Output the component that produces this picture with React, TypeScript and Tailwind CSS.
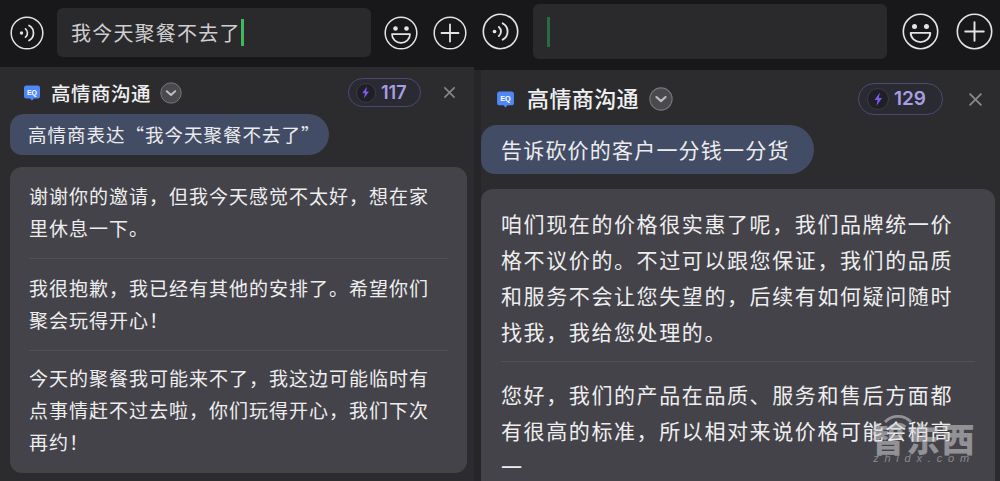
const font = { fontFamily: '"Noto Sans CJK SC", "Noto Sans", sans-serif' };

const VoiceIcon = ({ size }: { size: number }) => (
  <svg width={size} height={size} viewBox="0 0 34 34" fill="none" stroke="#e4e4e4">
    <circle cx="17" cy="17" r="15.8" strokeWidth="1.5" />
    <circle cx="11.5" cy="17" r="1.7" fill="#e4e4e4" stroke="none" />
    <path d="M15.5 12.8a5.5 5.5 0 0 1 0 8.4" strokeWidth="1.7" strokeLinecap="round" />
    <path d="M19 9.5a8.5 8.5 0 0 1 0 15" strokeWidth="1.7" strokeLinecap="round" />
  </svg>
);

const SmileIcon = ({ size }: { size: number }) => (
  <svg width={size} height={size} viewBox="0 0 34 34" fill="none" stroke="#e4e4e4">
    <circle cx="17" cy="17" r="15.8" strokeWidth="1.5" />
    <circle cx="11.5" cy="12.5" r="2.3" fill="#e4e4e4" stroke="none" />
    <circle cx="22.5" cy="12.5" r="2.3" fill="#e4e4e4" stroke="none" />
    <path d="M8 18.2h18a9 8.6 0 0 1-18 0z" strokeWidth="1.7" strokeLinejoin="round" />
  </svg>
);

const PlusIcon = ({ size }: { size: number }) => (
  <svg width={size} height={size} viewBox="0 0 34 34" fill="none" stroke="#e4e4e4">
    <circle cx="17" cy="17" r="15.8" strokeWidth="1.5" />
    <path d="M17 8.5v17M8.5 17h17" strokeWidth="1.8" strokeLinecap="round" />
  </svg>
);

const EqIcon = ({ size }: { size: number }) => (
  <svg width={size} height={size} viewBox="0 0 18 18">
    <path d="M3.5 1.5h11a2.5 2.5 0 0 1 2.5 2.5v8a2.5 2.5 0 0 1-2.5 2.5h-3.7L9 16.8l-1.8-2.3H3.5A2.5 2.5 0 0 1 1 12V4a2.5 2.5 0 0 1 2.5-2.5z" fill="#4f87f6" />
    <text x="9" y="10.8" textAnchor="middle" fill="#fff" fontSize="7" fontWeight="700" fontFamily="Liberation Sans, sans-serif">EQ</text>
  </svg>
);

const Chevron = ({ size }: { size: number }) => (
  <svg width={size} height={size} viewBox="0 0 22 22" fill="none">
    <circle cx="11" cy="11" r="10.2" fill="#4a4a4e" stroke="#77777b" strokeWidth="1" />
    <path d="M6.8 9.2l4.2 3.8 4.2-3.8" stroke="#bdbdc0" strokeWidth="2" strokeLinecap="round" strokeLinejoin="round" />
  </svg>
);

const Bolt = ({ size }: { size: number }) => (
  <span className="flex items-center justify-center rounded-full bg-[#1f1f25] border border-[#3b3a48]" style={{ width: size, height: size }}>
    <svg width={size * 0.66} height={size * 0.66} viewBox="0 0 14 14">
      <path d="M8.6 0.6L3.4 7.8h3L5.2 13.4l5.4-7.6H7.5z" fill="#7b5cf2" />
    </svg>
  </span>
);

const Close = ({ size }: { size: number }) => (
  <svg width={size} height={size} viewBox="0 0 14 14" fill="none">
    <path d="M1.5 1.5l11 11M12.5 1.5l-11 11" stroke="#88888c" strokeWidth="1.7" />
  </svg>
);

const Watermark = () => (
  <div className="absolute left-[866px] top-[412px] w-[116px] flex flex-col items-center opacity-55 pointer-events-none">
    <svg width="30" height="17" viewBox="0 0 30 17" fill="none" stroke="#d2d2d4" strokeWidth="2.8" className="self-start ml-[17px] -mb-[6px]">
      <path d="M2 10a18 18 0 0 1 26 0" />
      <path d="M7.5 15a11 11 0 0 1 15 0" />
    </svg>
    <div className="text-[33px] leading-[31px] tracking-[2px] font-black text-[#d2d2d4]">智东西</div>
    <div className="text-[11px] leading-[8px] italic tracking-[5.8px] text-[#c4c4c7] font-['Liberation_Sans',sans-serif]">zhidx.com</div>
  </div>
);

export default function App() {
  return (
    <div className="relative flex w-[1000px] h-[481px] overflow-hidden bg-[#18181a] text-[#ececee]" style={font}>
      {/* left phone */}
      <div className="w-[474px] h-full shrink-0 flex flex-col bg-[#2c2c2e]">
        <div className="h-[67px] shrink-0 flex items-start bg-[#18181a] pt-[8px]">
          <div className="mt-[8px] ml-[10px]"><VoiceIcon size={34} /></div>
          <div className="ml-[13px] w-[314px] h-[49px] rounded-[6px] bg-[#2a2a2d] flex items-center pl-[14px] text-[20px] tracking-[1.2px] text-[#cfcfd1] whitespace-nowrap">
            我今天聚餐不去了
            <span className="w-[3px] h-[27px] bg-[#3fb85f]" />
          </div>
          <div className="mt-[8px] ml-[13px]"><SmileIcon size={34} /></div>
          <div className="mt-[8px] ml-[15px]"><PlusIcon size={34} /></div>
        </div>
        <div className="flex items-center h-[47px] shrink-0 pt-[4px] pl-[23px]">
          <EqIcon size={18} />
          <span className="ml-[10px] text-[19.5px] font-medium tracking-[0.5px] text-[#f0f0f2] whitespace-nowrap">高情商沟通</span>
          <span className="ml-[9px]"><Chevron size={22} /></span>
          <span className="ml-[auto] flex items-center h-[29px] w-[73px] pl-[7px] rounded-full border border-[#4b4a72] bg-[#2a2a33]">
            <Bolt size={20} />
            <span className="ml-[5px] text-[18px] font-semibold text-[#a99de6] font-['Inter',sans-serif]">117</span>
          </span>
          <span className="ml-[22px] mr-[18px]"><Close size={13} /></span>
        </div>
        <div className="self-start shrink-0 ml-[10px] w-[319px] h-[41px] flex items-center pl-[18px] rounded-tl-[14px] rounded-bl-[12px] rounded-r-[21px] bg-[#434c65] text-[18.5px] tracking-[1px] whitespace-nowrap">
          高情商表达“我今天聚餐不去了”
        </div>
        <div className="shrink-0 mx-[10px] w-[457px] mt-[12px] h-[306px] rounded-[12px] bg-[#444349] px-[19px] text-[19px] leading-[32px] tracking-[1px] text-[#eeeeef]">
          <p className="h-[92px] pt-[13px] border-b border-[#525157]">谢谢你的邀请，但我今天感觉不太好，想在家里休息一下。</p>
          <p className="h-[92px] pt-[13px] border-b border-[#525157]">我很抱歉，我已经有其他的安排了。希望你们聚会玩得开心！</p>
          <p className="pt-[11px]">今天的聚餐我可能来不了，我这边可能临时有点事情赶不过去啦，你们玩得开心，我们下次再约！</p>
        </div>
      </div>

      <div className="w-[7px] h-full shrink-0 flex flex-col">
        <div className="h-[70px] bg-[#18181a]" />
        <div className="flex-1 bg-[#262628]" />
      </div>

      {/* right phone */}
      <div className="flex-1 h-full flex flex-col bg-[#2c2c2e]">
        <div className="h-[70px] shrink-0 flex items-start bg-[#18181a] pt-[4px]">
          <div className="mt-[9px] ml-[1px]"><VoiceIcon size={37} /></div>
          <div className="ml-[14px] w-[354px] h-[55px] rounded-[6px] bg-[#2a2a2d] flex items-center pl-[14px]">
            <span className="w-[3px] h-[30px] bg-[#2a6a3e]" />
          </div>
          <div className="mt-[9px] ml-[15px]"><SmileIcon size={37} /></div>
          <div className="mt-[9px] ml-[17px]"><PlusIcon size={37} /></div>
        </div>
        <div className="flex items-center h-[55px] shrink-0 pt-[3px] pl-[15px]">
          <EqIcon size={19} />
          <span className="ml-[12px] -mt-[3px] text-[22px] font-medium tracking-[0.4px] text-[#f0f0f2] whitespace-nowrap">高情商沟通</span>
          <span className="ml-[10px]"><Chevron size={24} /></span>
          <span className="ml-[auto] flex items-center h-[32px] w-[85px] pl-[8px] rounded-full border border-[#4b4a72] bg-[#2a2a33]">
            <Bolt size={22} />
            <span className="ml-[5px] text-[19px] font-semibold text-[#a99de6] font-['Inter',sans-serif]">129</span>
          </span>
          <span className="ml-[25px] mr-[17px]"><Close size={15} /></span>
        </div>
        <div className="self-start shrink-0 w-[333px] h-[49px] flex items-center pl-[20px] rounded-tl-[16px] rounded-bl-[14px] rounded-r-[25px] bg-[#434c65] text-[21px] tracking-[1.2px] whitespace-nowrap">
          告诉砍价的客户一分钱一分货
        </div>
        <div className="shrink-0 w-[514px] mt-[15px] h-[320px] rounded-t-[12px] bg-[#444349] px-[20px] text-[21px] leading-[36px] tracking-[1.6px] text-[#eeeeef]">
          <p className="h-[173px] pt-[16px] border-b border-[#525157]">咱们现在的价格很实惠了呢，我们品牌统一价格不议价的。不过可以跟您保证，我们的品质和服务不会让您失望的，后续有如何疑问随时找我，我给您处理的。</p>
          <p className="pt-[14px]">您好，我们的产品在品质、服务和售后方面都有很高的标准，所以相对来说价格可能会稍高一</p>
        </div>
      </div>
      <Watermark />
    </div>
  );
}
